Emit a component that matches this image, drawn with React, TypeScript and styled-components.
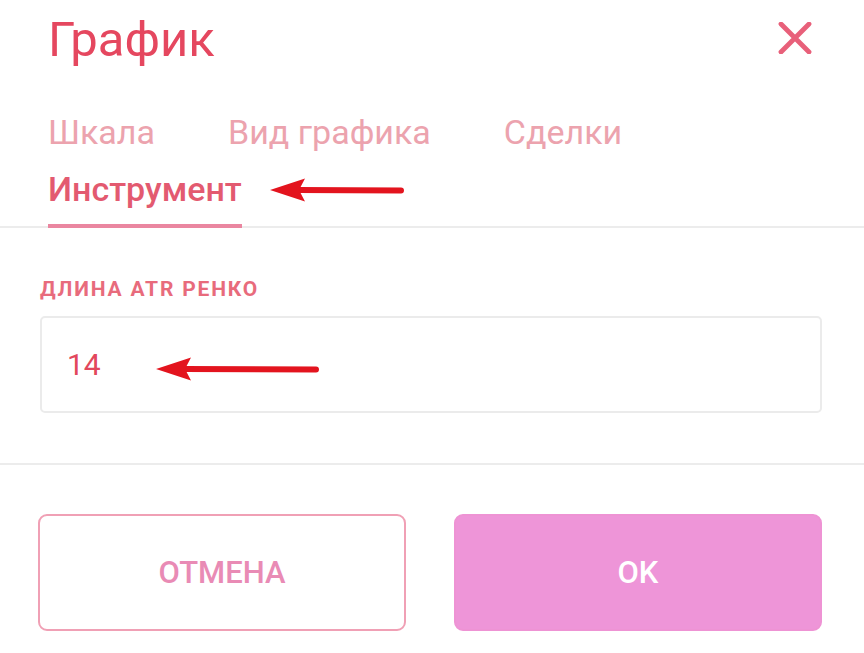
import * as React from 'react';
import styled, { createGlobalStyle } from 'styled-components';

const GlobalStyle = createGlobalStyle`
    html, body {
        margin: 0;
        padding: 0;
        background: #ffffff;
    }
    body {
        font-family: Roboto, "Noto Sans", "Liberation Sans", sans-serif;
    }
    * {
        box-sizing: border-box;
    }
`;

const tabs = ['Шкала', 'Вид графика', 'Сделки', 'Инструмент'];

const Arrow = ({ x, y, length }: { x: number; y: number; length: number }) => (
    <ArrowBox $x={x} $y={y} width={length} height={26} viewBox={`0 0 ${length} 26`}>
        <line x1={28} y1={13} x2={length - 4} y2={13.5} stroke="#e3141e" strokeWidth={6} strokeLinecap="round" />
        <path d="M0 13 L35 1.5 L29 13 L35 24.5 Z" fill="#e3141e" />
    </ArrowBox>
);

const App = () => {
    const [active] = React.useState('Инструмент');

    return (
        <>
            <GlobalStyle />
            <Dialog>
                <Header>
                    <Title>График</Title>
                    <CloseButton aria-label="close">
                        <svg width="34" height="32" viewBox="0 0 34 32">
                            <path d="M3 2 L31 30 M31 2 L3 30" stroke="#e8607a" strokeWidth="4.8" strokeLinecap="round" />
                        </svg>
                    </CloseButton>
                </Header>

                <Tabs>
                    {tabs.map(t => (
                        <Tab key={t} $active={t === active}>{t}</Tab>
                    ))}
                </Tabs>

                <Body>
                    <Label>ДЛИНА ATR РЕНКО</Label>
                    <Field>14</Field>
                </Body>

                <Footer>
                    <CancelButton>ОТМЕНА</CancelButton>
                    <OkButton>OK</OkButton>
                </Footer>

                <Arrow x={270} y={177} length={135} />
                <Arrow x={156} y={356} length={164} />
            </Dialog>
        </>
    );
};

const Dialog = styled.div`
    position: relative;
    width: 864px;
    height: 653px;
    background: #ffffff;
    overflow: hidden;
`;

const Header = styled.div`
    display: flex;
    align-items: center;
    justify-content: space-between;
    padding: 16px 52px 0 48px;
`;

const Title = styled.h1`
    margin: 0;
    font-size: 49px;
    line-height: 48px;
    font-weight: 400;
    color: #e5475f;
`;

const CloseButton = styled.button`
    display: flex;
    padding: 0;
    border: none;
    background: none;
    margin-top: -4px;
`;

const Tabs = styled.div`
    display: flex;
    flex-wrap: wrap;
    column-gap: 73px;
    margin-top: 48px;
    padding: 0 48px;
    border-bottom: 2px solid #ececec;
`;

const Tab = styled.div<{ $active: boolean }>`
    padding-bottom: 15px;
    font-size: 34px;
    line-height: 40px;
    font-weight: ${p => (p.$active ? 500 : 400)};
    color: ${p => (p.$active ? '#e35a70' : '#eca3ae')};
    border-bottom: 4px solid ${p => (p.$active ? '#ea86a0' : 'transparent')};
    margin-bottom: -2px;
`;

const Body = styled.div`
    display: flex;
    flex-direction: column;
    gap: 15px;
    padding: 49px 42px 50px 40px;
    border-bottom: 2px solid #ececec;
`;

const Label = styled.div`
    font-size: 21px;
    line-height: 24px;
    font-weight: 700;
    color: #e86b7c;
    letter-spacing: 1.8px;
`;

const Field = styled.div`
    display: flex;
    align-items: center;
    height: 97px;
    padding-left: 25px;
    border: 2px solid #ebebeb;
    border-radius: 5px;
    font-size: 30px;
    color: #e2475c;
`;

const Footer = styled.div`
    display: grid;
    grid-template-columns: 1fr 1fr;
    gap: 48px;
    padding: 49px 42px 0 38px;
`;

const BaseButton = styled.button`
    height: 117px;
    border-radius: 9px;
    font-family: Roboto, "Noto Sans", sans-serif;
    font-size: 31px;
    font-weight: 500;
`;

const CancelButton = styled(BaseButton)`
    background: #ffffff;
    border: 2px solid #f0a0b5;
    color: #e98bb5;
`;

const OkButton = styled(BaseButton)`
    background: #ee95d8;
    border: 2px solid #ee93d4;
    color: #ffffff;
`;

const ArrowBox = styled.svg<{ $x: number; $y: number }>`
    position: absolute;
    left: ${p => p.$x}px;
    top: ${p => p.$y}px;
`;

export default App;
